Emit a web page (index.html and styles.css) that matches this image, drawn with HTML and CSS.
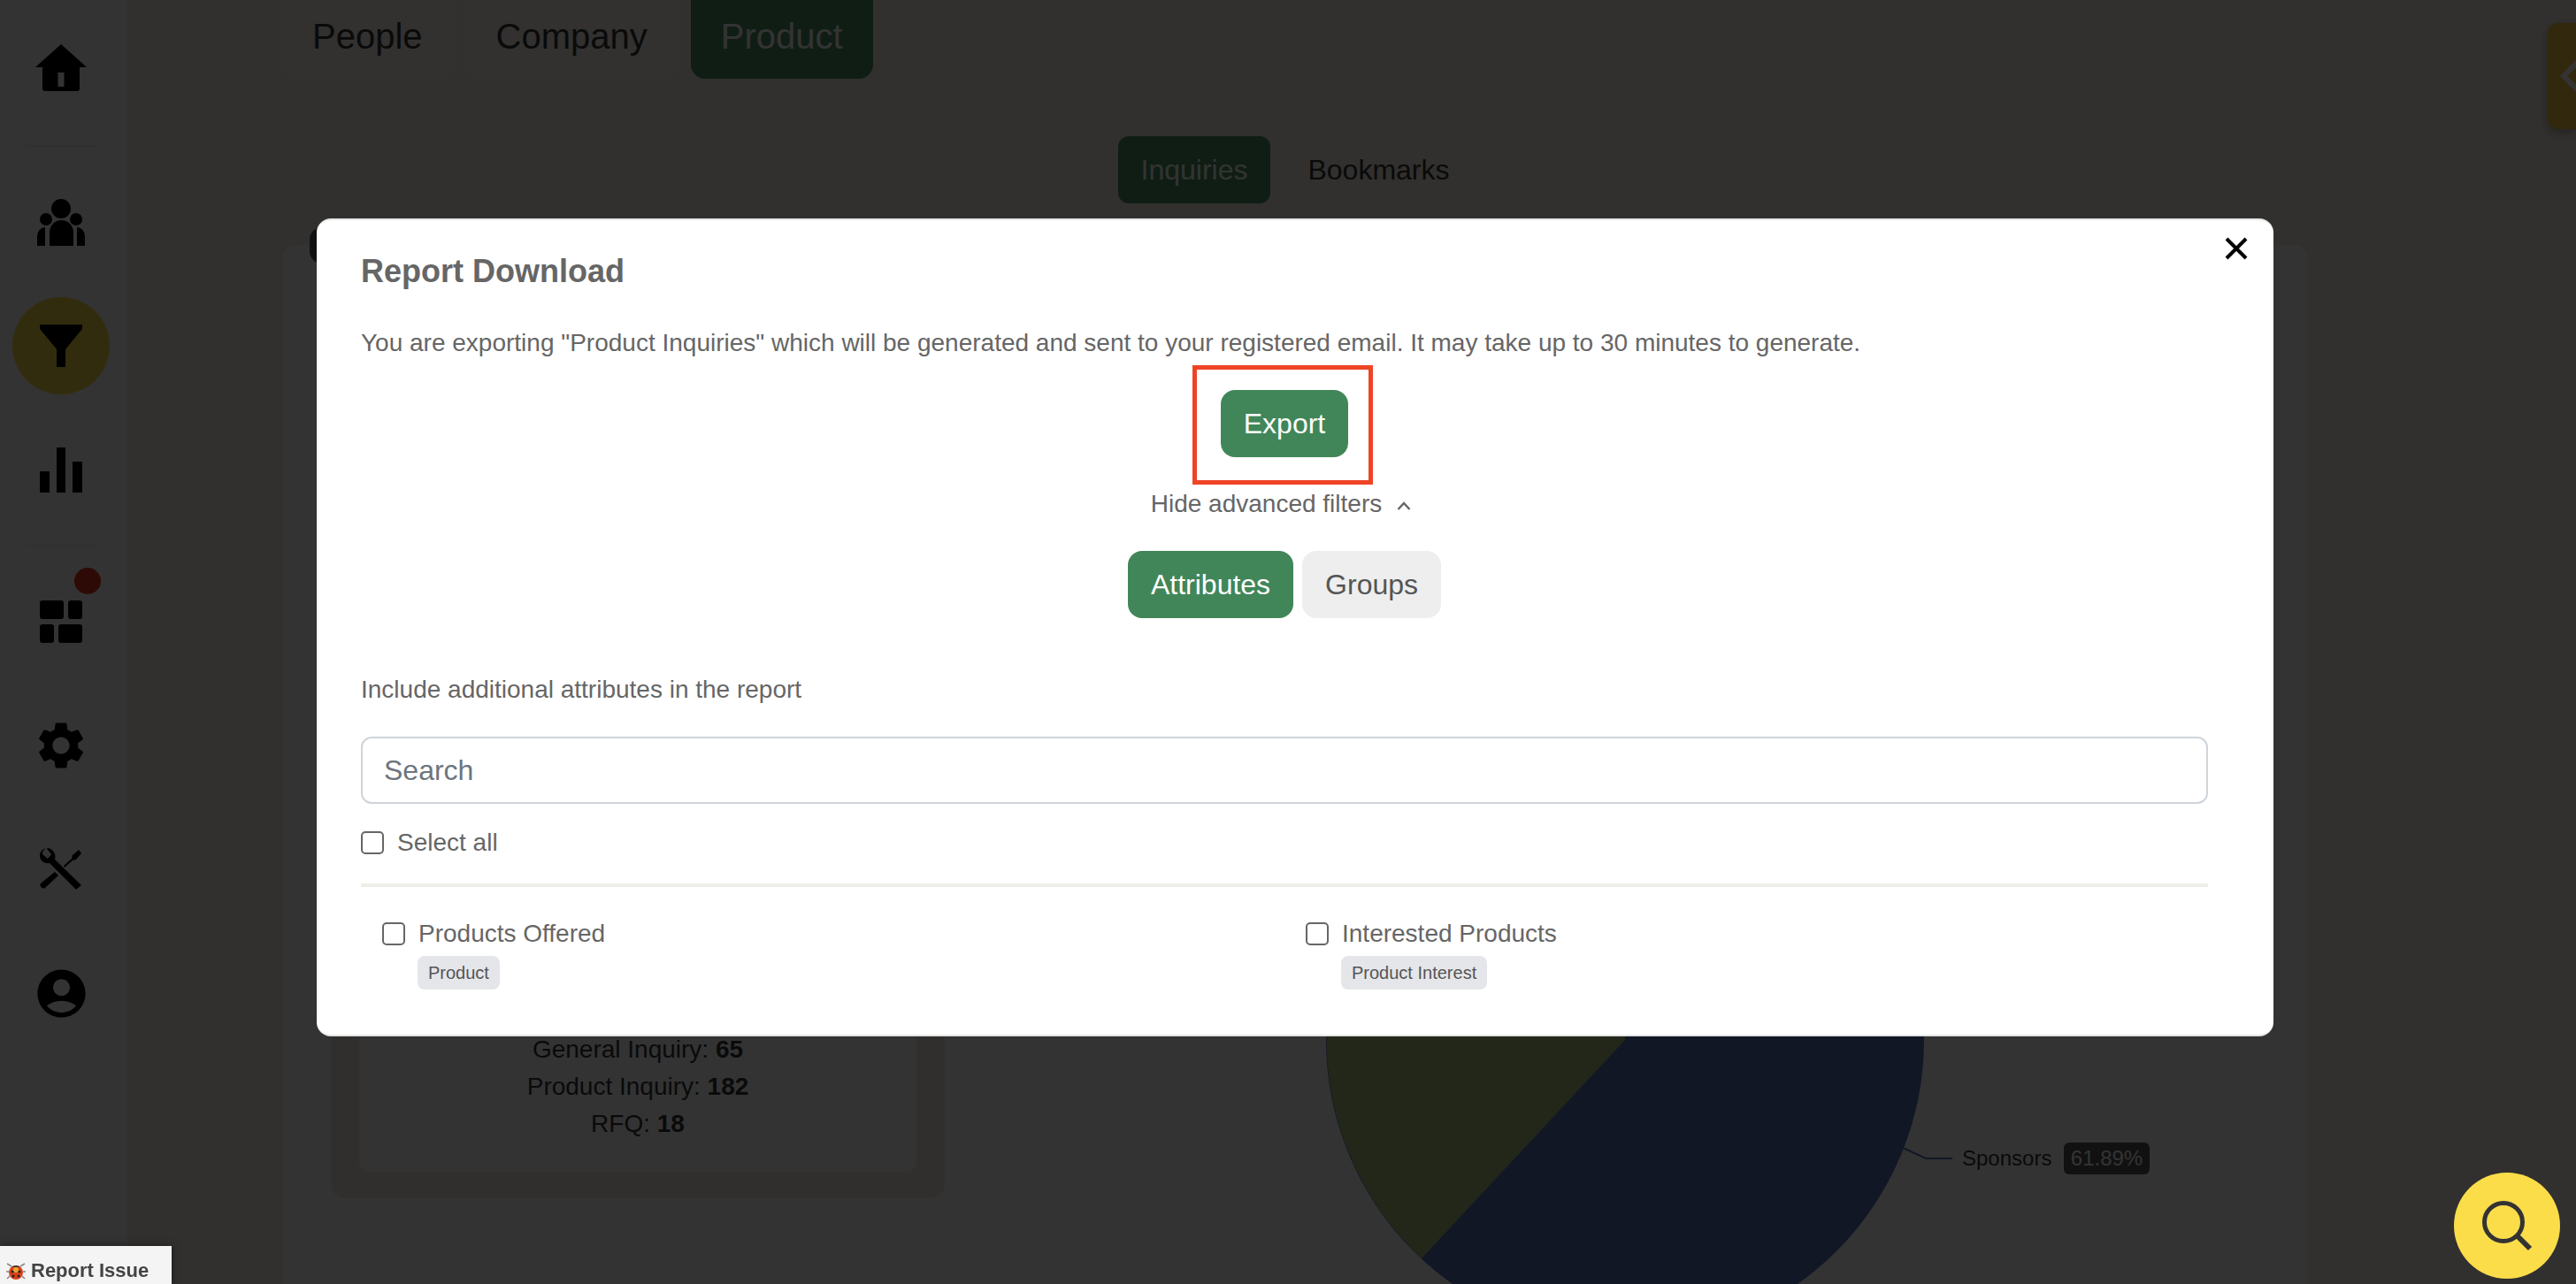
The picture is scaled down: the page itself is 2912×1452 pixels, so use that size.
FILE: index.html
```html
<!DOCTYPE html>
<html lang="en">

<head>
    <meta charset="UTF-8">
    <meta name="viewport" content="width=device-width, initial-scale=1.0">
    <title>Report Download</title>
    <link rel="stylesheet" href="styles.css">
</head>

<body>
    <div class="page">
        <nav class="sidebar">
            <a class="nav-item">
                <svg width="58" height="53" viewBox="0 0 58 53"><path fill-rule="evenodd" d="M29 0L58 26H50V50a3 3 0 0 1-3 3H11a3 3 0 0 1-3-3V26H0ZM25.500 32v16h7V32Z"/></svg>
            </a>
            <div class="nav-divider nav-divider-first"></div>
            <a class="nav-item">
                <svg width="54" height="53" viewBox="0 0 54 53">
                    <circle cx="27" cy="11" r="11"/>
                    <circle cx="10" cy="23" r="7"/>
                    <circle cx="44" cy="23" r="7"/>
                    <path d="M14 53V38a13.500 14 0 0 1 27 0V53Z"/>
                    <path d="M0 53V42a9 10 0 0 1 9-10V53Z"/>
                    <path d="M54 53V42a9 10 0 0 0-9-10V53Z"/>
                </svg>
            </a>
            <a class="nav-item nav-item-active">
                <svg width="48" height="48" viewBox="0 0 48 48"><path d="M0 0H48V5L29 28V48H19V28L0 5Z"/></svg>
            </a>
            <a class="nav-item">
                <svg width="48" height="51" viewBox="0 0 48 51">
                    <rect x="0" y="27" width="11" height="24"/>
                    <rect x="19" y="0" width="10" height="51"/>
                    <rect x="37" y="16" width="11" height="35"/>
                </svg>
            </a>
            <div class="nav-divider"></div>
            <a class="nav-item nav-item-badged">
                <svg width="48" height="48" viewBox="0 0 48 48">
                    <rect x="0" y="0" width="27" height="21" rx="3"/>
                    <rect x="32" y="0" width="16" height="21" rx="3"/>
                    <rect x="0" y="27" width="16" height="21" rx="3"/>
                    <rect x="21" y="27" width="27" height="21" rx="3"/>
                </svg>
                <span class="nav-badge"></span>
            </a>
            <a class="nav-item">
                <svg width="64" height="64" viewBox="0 0 24 24"><path d="M19.140 12.940c.04-.3.06-.61.06-.94 0-.32-.02-.64-.07-.94l2.030-1.580c.18-.14.23-.41.12-.61l-1.920-3.320c-.12-.22-.37-.29-.59-.22l-2.390.96c-.5-.38-1.030-.7-1.620-.94l-.36-2.540c-.04-.24-.24-.41-.48-.41h-3.840c-.24 0-.43.17-.47.41l-.36 2.540c-.59.24-1.130.57-1.620.94l-2.390-.96c-.22-.08-.47 0-.59.22L2.740 8.870c-.12.21-.08.47.12.61l2.030 1.580c-.05.3-.09.63-.09.94s.02.64.07.94l-2.030 1.580c-.18.14-.23.41-.12.61l1.920 3.320c.12.22.37.29.59.22l2.390-.96c.5.38 1.030.7 1.620.94l.36 2.540c.05.24.24.41.48.41h3.840c.24 0 .44-.17.47-.41l.36-2.540c.59-.24 1.130-.56 1.620-.94l2.390.96c.22.08.47 0 .59-.22l1.920-3.320c.12-.22.07-.47-.12-.61l-2.010-1.580zM12 15.600c-1.980 0-3.600-1.620-3.600-3.600s1.620-3.600 3.600-3.600 3.600 1.620 3.600 3.600-1.620 3.600-3.600 3.600z"/></svg>
            </a>
            <a class="nav-item">
                <svg width="48" height="48" viewBox="0 0 48 48">
                    <path d="M1 40L17 27l4 4L6 45c-3 2-7-2-5-5Z"/>
                    <path d="M27 20L36 12l1-4 7-6 3 4-6 7-4 1-9 8Z"/>
                    <path d="M9 0C4 0 0 4 0 8.500 0 14 5 18 11 17L41 47l6-5L17 13c2-6-2-12-8-13l-1 1 5 6-4 5-6-5c-.3-3 2-7 6-7Z"/>
                </svg>
            </a>
            <a class="nav-item">
                <svg width="65" height="65" viewBox="0 0 24 24"><path d="M12 2C6.480 2 2 6.480 2 12s4.480 10 10 10 10-4.480 10-10S17.520 2 12 2zm0 4c1.930 0 3.500 1.570 3.500 3.500S13.930 13 12 13s-3.500-1.570-3.500-3.500S10.070 6 12 6zm0 14c-2.030 0-4.430-.82-6.140-2.880C7.550 15.800 9.680 15 12 15s4.450.8 6.140 2.120C16.430 19.180 14.030 20 12 20z"/></svg>
            </a>
        </nav>

        <main class="content">
            <div class="top-tabs">
                <a class="top-tab">People</a>
                <a class="top-tab">Company</a>
                <a class="top-tab top-tab-active">Product</a>
            </div>
            <div class="sub-tabs">
                <a class="sub-tab sub-tab-active">Inquiries</a>
                <a class="sub-tab">Bookmarks</a>
            </div>
            <section class="card">
                <span class="card-pill"></span>
                <div class="summary">
                    <div class="summary-inner">
                        <p>General Inquiry: <b>65</b></p>
                        <p>Product Inquiry: <b>182</b></p>
                        <p>RFQ: <b>18</b></p>
                    </div>
                </div>
                <svg class="chart" width="1400" height="1100" viewBox="1100 377 1400 1100">
                    <circle cx="1837" cy="1176" r="338" fill="#5475b8"/>
                    <path d="M1837 1176L1607 1423A338 338 0 0 1 1837 838Z" fill="#a8c480"/>
                    <path d="M2151 1298L2177 1310H2207" fill="none" stroke="#5475b8" stroke-width="2"/>
                    <text class="chart-label" x="2218" y="1318">Sponsors</text>
                    <rect x="2333" y="1292" width="97" height="36" rx="6" fill="#555"/>
                    <text class="chart-value" x="2381.500" y="1318" text-anchor="middle">61.89%</text>
                </svg>
            </section>
        </main>

        <div class="side-tab">
            <svg width="32" height="120" viewBox="0 0 32 120"><path d="M40 38L18 60l22 22" fill="none" stroke="#fff" stroke-width="6"/></svg>
        </div>
    </div>

    <div class="backdrop">
        <div class="modal">
            <button class="modal-close">
                <svg width="26" height="26" viewBox="0 0 26 26"><path d="M2 2L24 24M24 2L2 24" stroke="#000" stroke-width="4"/></svg>
            </button>
            <h2 class="modal-title">Report Download</h2>
            <p class="modal-text">You are exporting "Product Inquiries" which will be generated and sent to your registered email. It may take up to 30 minutes to generate.</p>
            <div class="export-row">
                <button class="btn btn-green">Export<span class="export-ring"></span></button>
            </div>
            <div class="advanced-toggle">
                Hide advanced filters
                <svg width="16" height="10" viewBox="0 0 16 10"><path d="M1.500 9L8 2l6.500 7" fill="none" stroke="#666" stroke-width="2.500"/></svg>
            </div>
            <div class="filter-tabs">
                <button class="btn btn-green">Attributes</button>
                <button class="btn btn-grey">Groups</button>
            </div>
            <p class="include-label">Include additional attributes in the report</p>
            <input class="search-input" type="text" placeholder="Search">
            <label class="check-row select-all"><input type="checkbox">Select all</label>
            <hr class="modal-rule">
            <div class="attribute-grid">
                <div class="attribute">
                    <label class="check-row"><input type="checkbox">Products Offered</label>
                    <span class="tag">Product</span>
                </div>
                <div class="attribute">
                    <label class="check-row"><input type="checkbox">Interested Products</label>
                    <span class="tag">Product Interest</span>
                </div>
            </div>
        </div>
    </div>

    <button class="search-fab">
        <svg width="60" height="60" viewBox="0 0 60 60">
            <circle cx="26" cy="26" r="21.500" fill="none" stroke="#333" stroke-width="5"/>
            <path d="M41 41L56 56" stroke="#333" stroke-width="6"/>
        </svg>
    </button>

    <a class="report-issue">
        <svg width="22" height="22" viewBox="0 0 22 22">
            <path d="M6 6L1 3M16 6l5-3M3 12H0M19 12h3M4 17l-3 3M18 17l3 3" stroke="#888" stroke-width="1.500"/>
            <circle cx="11" cy="13" r="8" fill="#d8431c"/>
            <path d="M6 7a6 4 0 0 1 10 0Z" fill="#333"/>
            <circle cx="11" cy="10" r="3" fill="#e9a52c"/>
            <circle cx="7" cy="12" r="1.500" fill="#222"/>
            <circle cx="15" cy="12" r="1.500" fill="#222"/>
            <circle cx="8" cy="17" r="1.500" fill="#222"/>
            <circle cx="14" cy="17" r="1.500" fill="#222"/>
        </svg>
        Report Issue
    </a>
</body>

</html>
```

FILE: styles.css
```css
* {
    box-sizing: border-box;
}

html,
body {
    margin: 0;
    height: 100%;
    overflow: hidden;
}

body {
    font-family: "Liberation Sans", Arial, sans-serif;
    color: #333;
    background: #f5f0e6;
}

p {
    margin: 0;
}

.page {
    display: flex;
    height: 100vh;
    overflow: hidden;
}

/* sidebar */
.sidebar {
    width: 144px;
    flex-shrink: 0;
    background: #fff;
    padding: 21px 6px 0 0;
    display: flex;
    flex-direction: column;
    align-items: center;
    gap: 30px;
}

.nav-item {
    position: relative;
    width: 110px;
    height: 110px;
    flex-shrink: 0;
    border-radius: 50%;
    display: flex;
    align-items: center;
    justify-content: center;
}

.nav-item-active {
    background: #fbdd4a;
}

.nav-badge {
    position: absolute;
    top: -6px;
    right: 10px;
    width: 30px;
    height: 30px;
    border-radius: 50%;
    background: #e63320;
}

.nav-divider {
    width: 80px;
    height: 2px;
    flex-shrink: 0;
    background: #eee;
}

.nav-divider-first {
    margin-top: 3px;
}

/* page content behind the dialog */
.content {
    flex: 1;
    min-width: 0;
    padding: 0 303px 0 173px;
}

.top-tabs {
    display: flex;
    gap: 11px;
    height: 89px;
}

.top-tab {
    padding: 18px 36px 0;
    font-size: 40px;
    line-height: 46px;
    background: #f8f5f0;
    border-radius: 0 0 16px 16px;
}

.top-tab-active {
    margin-left: 2px;
    padding: 18px 34px 0;
    background: #4b9164;
    color: #fff;
}

.sub-tabs {
    display: flex;
    justify-content: center;
    gap: 16px;
    margin: 65px 0 0 2px;
}

.sub-tab {
    padding: 0 26px;
    height: 76px;
    line-height: 76px;
    font-size: 32px;
    border-radius: 12px;
}

.sub-tab-active {
    background: #4b9164;
    color: #fff;
}

.card {
    position: relative;
    display: flex;
    align-items: flex-start;
    margin: 47px 0 0 2px;
    padding: 100px 0 0 55px;
    height: 1300px;
    background: #fff;
    border-radius: 16px;
}

.card-pill {
    position: absolute;
    top: -20px;
    left: 31px;
    width: 150px;
    height: 41px;
    border-radius: 14px;
    background: #555;
}

.summary {
    width: 694px;
    height: 978px;
    flex-shrink: 0;
    padding: 30px 32px;
    background: #f0ebe0;
    border-radius: 16px;
}

.summary-inner {
    height: 100%;
    padding-bottom: 33px;
    display: flex;
    flex-direction: column;
    justify-content: flex-end;
    text-align: center;
    font-size: 28px;
    line-height: 42px;
    background: #fff;
    border-radius: 12px;
}

.chart {
    flex-shrink: 0;
    margin-left: 32px;
}

.chart-label {
    font-size: 24px;
    fill: #333;
}

.chart-value {
    font-size: 24px;
    fill: #fff;
}

.side-tab {
    position: absolute;
    top: 26px;
    right: 0;
    width: 32px;
    height: 120px;
    background: #f5c842;
    border-radius: 12px 0 0 12px;
    box-shadow: 0 4px 12px rgba(0, 0, 0, 0.3);
    overflow: hidden;
}

.side-tab svg {
    display: block;
}

/* dialog */
.backdrop {
    position: fixed;
    inset: 0;
    background: rgba(0, 0, 0, 0.8);
}

.modal {
    position: relative;
    width: 2212px;
    height: 925px;
    margin: 247px 0 0 358px;
    padding: 36px 74px 0 50px;
    background: #fff;
    border-top: 2px solid #e5e5e5;
    border-bottom: 2px solid #e5e5e5;
    border-radius: 16px;
    color: #666;
}

.modal-close {
    position: absolute;
    top: 19px;
    right: 29px;
    padding: 0;
    border: 0;
    background: none;
    line-height: 0;
}

.modal-title {
    margin: 0;
    font-size: 36px;
    line-height: 44px;
}

.modal-text {
    margin-top: 39px;
    font-size: 28px;
    line-height: 40px;
}

.export-row {
    display: flex;
    justify-content: center;
    margin-top: 33px;
}

.btn {
    height: 76px;
    padding: 0 26px;
    border: 0;
    border-radius: 16px;
    font-family: inherit;
    font-size: 32px;
}

.btn-green {
    background: #418659;
    color: #fff;
}

.btn-grey {
    background: #eee;
    color: #555;
}

.export-row .btn {
    position: relative;
    width: 144px;
    padding: 0;
}

.export-ring {
    position: absolute;
    top: -28px;
    left: -32px;
    width: 204px;
    height: 135px;
    border: 5px solid #ee4426;
}

.advanced-toggle {
    display: flex;
    justify-content: center;
    align-items: center;
    gap: 17px;
    margin: 33px 8px 0 0;
    font-size: 28px;
    line-height: 40px;
}

.advanced-toggle svg {
    margin-top: 4px;
}

.filter-tabs {
    display: flex;
    justify-content: center;
    gap: 10px;
    margin-top: 33px;
}

.include-label {
    margin-top: 61px;
    font-size: 28px;
    line-height: 40px;
}

.search-input {
    display: block;
    width: 100%;
    height: 76px;
    margin-top: 33px;
    padding: 0 24px;
    border: 2px solid #ced4da;
    border-radius: 12px;
    font-family: inherit;
    font-size: 32px;
    color: #6c757d;
}

.search-input::placeholder {
    color: #6c757d;
    opacity: 1;
}

.check-row {
    display: flex;
    align-items: center;
    gap: 15px;
    font-size: 28px;
    line-height: 40px;
}

.check-row input {
    appearance: none;
    width: 26px;
    height: 26px;
    margin: 0;
    background: #fff;
    border: 2px solid #666;
    border-radius: 5px;
}

.select-all {
    margin-top: 24px;
}

.modal-rule {
    height: 4px;
    margin: 26px 0 0;
    border: 0;
    background: #eeeee8;
}

.attribute-grid {
    display: grid;
    grid-template-columns: 1fr 1fr;
    margin-top: 33px;
}

.attribute {
    padding-left: 24px;
}

.tag {
    display: inline-block;
    height: 38px;
    margin: 5px 0 0 40px;
    padding: 0 12px;
    font-size: 20px;
    line-height: 38px;
    color: #555;
    background: #e5e6ea;
    border-radius: 8px;
}

/* things that stay above the dialog */
.search-fab {
    position: fixed;
    right: 18px;
    bottom: 6px;
    width: 120px;
    height: 120px;
    padding: 0;
    border: 0;
    border-radius: 50%;
    background: #fbdd4a;
    display: flex;
    align-items: center;
    justify-content: center;
}

.report-issue {
    position: fixed;
    left: 0;
    bottom: 0;
    width: 194px;
    height: 43px;
    padding: 12px 0 0 7px;
    display: flex;
    align-items: center;
    gap: 6px;
    font-size: 22px;
    font-weight: bold;
    color: #444;
    background: #f4f4f4;
    box-shadow: 0 0 8px rgba(0, 0, 0, 0.5);
}
```
